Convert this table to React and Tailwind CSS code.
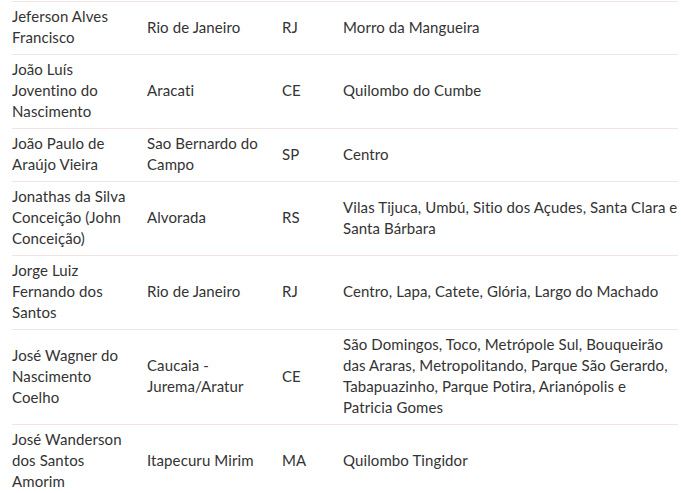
const rows = [
  {
    name: ['Jeferson Alves', 'Francisco'],
    city: ['Rio de Janeiro'],
    uf: 'RJ',
    area: ['Morro da Mangueira'],
  },
  {
    name: ['João Luís', 'Joventino do', 'Nascimento'],
    city: ['Aracati'],
    uf: 'CE',
    area: ['Quilombo do Cumbe'],
  },
  {
    name: ['João Paulo de', 'Araújo Vieira'],
    city: ['Sao Bernardo do', 'Campo'],
    uf: 'SP',
    area: ['Centro'],
  },
  {
    name: ['Jonathas da Silva', 'Conceição (John', 'Conceição)'],
    city: ['Alvorada'],
    uf: 'RS',
    area: ['Vilas Tijuca, Umbú, Sitio dos Açudes, Santa Clara e', 'Santa Bárbara'],
  },
  {
    name: ['Jorge Luiz', 'Fernando dos', 'Santos'],
    city: ['Rio de Janeiro'],
    uf: 'RJ',
    area: ['Centro, Lapa, Catete, Glória, Largo do Machado'],
  },
  {
    name: ['José Wagner do', 'Nascimento', 'Coelho'],
    city: ['Caucaia -', 'Jurema/Aratur'],
    uf: 'CE',
    area: [
      'São Domingos, Toco, Metrópole Sul, Bouqueirão',
      'das Araras, Metropolitando, Parque São Gerardo,',
      'Tabapuazinho, Parque Potira, Arianópolis e',
      'Patricia Gomes',
    ],
  },
  {
    name: ['José Wanderson', 'dos Santos', 'Amorim'],
    city: ['Itapecuru Mirim'],
    uf: 'MA',
    area: ['Quilombo Tingidor'],
  },
]

function Lines({ lines }) {
  return (
    <div>
      {lines.map((l, i) => (
        <span key={i} className="block whitespace-nowrap">
          {l}
        </span>
      ))}
    </div>
  )
}

export default function App() {
  return (
    <div className="min-h-screen bg-white pt-px pl-[12px] pr-[3px] text-[15px] leading-[21px] tracking-[0.1px] text-[#333]" style={{ fontFamily: 'Lato, "Liberation Sans", sans-serif' }}>
      {rows.map((r, i) => (
        <div
          key={i}
          className="grid grid-cols-[135px_135px_61px_1fr] items-center border-t border-[#f4e3e5] pt-[4px] pb-[6px]"
        >
          <Lines lines={r.name} />
          <Lines lines={r.city} />
          <div>{r.uf}</div>
          <Lines lines={r.area} />
        </div>
      ))}
    </div>
  )
}
